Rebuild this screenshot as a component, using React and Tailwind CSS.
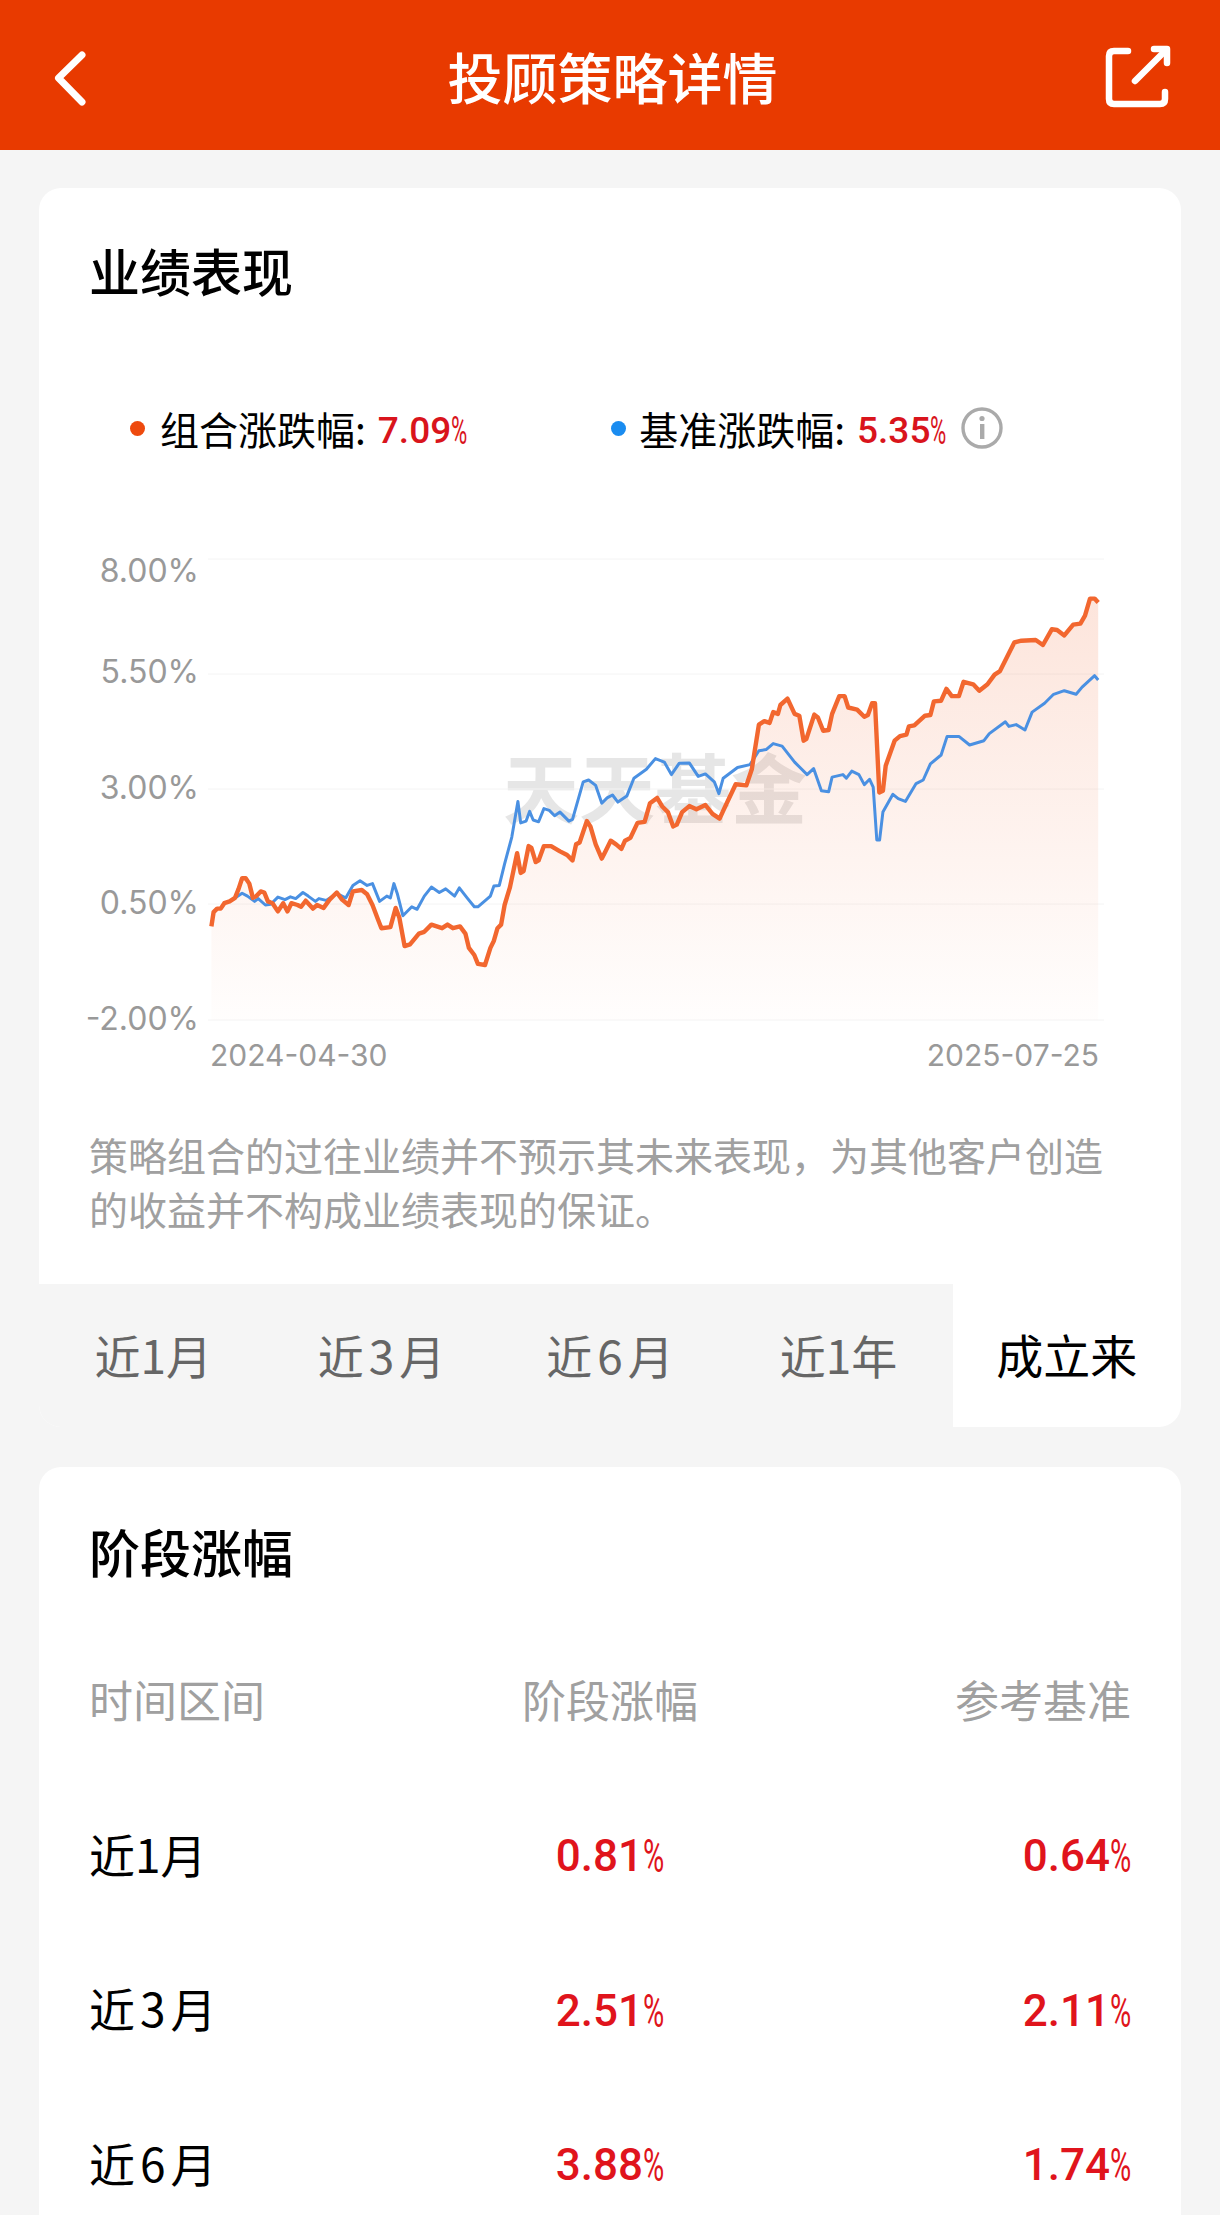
import React from "react";

const cjk = "font-['Noto_Sans_CJK_SC',sans-serif]";
const num = "font-['Roboto','Noto_Sans_CJK_SC',sans-serif]";
const axis = "font-['Inter','Noto_Sans_CJK_SC',sans-serif]";

// traced from the reference, left half is offset 60/530 and right half 600/530, both at 2.8x
const toPage = (ox) => ([x, y]) => [ox + x / 2.8, 530 + y / 2.8];

const orangeLeft = [[424,1110],[430,1070],[440,1060],[450,1060],[460,1045],[475,1040],[490,1030],[500,1005],[510,975],[520,975],[530,990],[540,1030],[550,1025],[562,1012],[572,1015],[582,1040],[595,1045],[610,1068],[625,1045],[637,1068],[648,1045],[665,1050],[675,1055],[688,1038],[708,1060],[720,1050],[738,1058],[755,1035],[775,1015],[790,1035],[808,1050],[820,1012],[845,1008],[860,1020],[875,1050],[890,1090],[900,1115],[925,1112],[940,1058],[950,1085],[965,1165],[980,1160],[1005,1130],[1020,1125],[1040,1105],[1070,1115],[1085,1105],[1100,1115],[1120,1110],[1135,1130],[1145,1170],[1160,1190],[1170,1215],[1190,1218],[1205,1170],[1215,1150],[1225,1115],[1235,1105],[1245,1050],[1260,1000],[1280,905],[1290,960],[1298,955],[1312,885],[1320,890],[1332,930],[1340,925],[1355,885],[1375,885],[1400,900],[1420,910],[1435,925],[1445,880],[1455,875],[1475,815],[1485,830],[1500,880],[1517,920]];
const orangeRight = [[15,900],[30,870],[45,880],[60,893],[70,870],[85,862],[105,820],[125,817],[140,765],[160,750],[175,775],[190,790],[205,830],[215,825],[230,790],[250,773],[270,782],[295,770],[315,795],[335,808],[350,775],[380,712],[410,715],[425,670],[445,545],[460,535],[475,540],[485,510],[498,515],[505,490],[525,472],[545,515],[558,520],[570,590],[578,585],[600,517],[610,525],[625,562],[640,560],[650,515],[670,465],[685,465],[695,497],[720,503],[740,523],[750,518],[762,485],[770,485],[782,735],[792,730],[800,660],[825,590],[840,577],[858,573],[865,550],[880,547],[910,520],[925,518],[935,480],[955,478],[970,445],[985,465],[1005,465],[1018,425],[1045,432],[1062,450],[1085,432],[1105,405],[1120,395],[1160,315],[1180,310],[1220,308],[1240,322],[1265,278],[1280,280],[1300,295],[1325,265],[1345,262],[1358,240],[1372,192],[1385,192],[1395,203]];
const blueLeft = [[490,1030],[510,1017],[525,1025],[545,1040],[555,1032],[575,1050],[590,1048],[610,1028],[630,1035],[645,1027],[660,1032],[680,1015],[695,1025],[715,1040],[725,1032],[745,1037],[775,1018],[800,1030],[820,995],[840,982],[860,995],[875,990],[895,1040],[915,1025],[925,1030],[935,990],[945,1020],[960,1080],[985,1055],[1000,1062],[1020,1025],[1040,1000],[1062,1015],[1080,1005],[1105,1025],[1118,1002],[1140,1030],[1160,1055],[1170,1055],[1205,1025],[1215,997],[1230,995],[1245,935],[1265,860],[1282,760],[1290,820],[1305,815],[1315,788],[1325,812],[1340,817],[1355,780],[1370,785],[1385,800],[1400,790],[1425,815],[1435,810],[1465,705],[1480,700],[1500,715],[1517,765]];
const blueRight = [[20,750],[35,742],[50,762],[75,745],[95,695],[130,670],[155,640],[180,650],[200,685],[222,653],[250,652],[275,690],[295,683],[320,705],[333,738],[345,695],[385,665],[420,657],[445,618],[465,615],[485,598],[510,605],[545,650],[560,665],[580,685],[598,668],[620,730],[640,733],[650,692],[680,685],[690,695],[705,675],[725,685],[740,713],[755,698],[765,720],[775,868],[783,868],[792,790],[820,740],[835,752],[855,760],[885,710],[905,700],[925,655],[955,630],[972,578],[1005,578],[1035,602],[1075,590],[1090,570],[1135,537],[1145,550],[1165,545],[1190,560],[1210,510],[1245,485],[1270,460],[1300,450],[1333,460],[1350,440],[1385,408],[1395,420]];

const orange = [...orangeLeft.map(toPage(60)), ...orangeRight.map(toPage(600))];
const blue = [...blueLeft.map(toPage(60)), ...blueRight.map(toPage(600))];
const line = (pts) => pts.map((p) => p[0].toFixed(1) + "," + p[1].toFixed(1)).join(" ");
const area = line([[orange[0][0], 1020], ...orange, [orange[orange.length - 1][0], 1020]]);

const BigPercent = ({ value }) => (
  <span className={`${num} text-[44px] font-medium text-[#e0141c] whitespace-nowrap`}>
    {value}
    <span className="inline-block w-[21px] origin-left scale-x-[0.66] scale-y-[1.06] font-normal">%</span>
  </span>
);

const SmallPercent = ({ value }) => (
  <span className={`${num} text-[37px] font-medium text-[#d9141c] whitespace-nowrap`}>
    {value}
    <span className="inline-block w-[17px] origin-left scale-x-[0.6] scale-y-[1.06] font-normal">%</span>
  </span>
);

const Chart = () => (
  <div className="relative h-[568px] mt-[111px]">
    {/* watermark */}
    <div className={`${cjk} absolute left-[414px] top-[181px] text-[76px] font-bold leading-[90px] whitespace-nowrap text-[#e6e6e6]`}>
      天天基金
    </div>
    <svg className="absolute left-[-89px] top-[-559px] overflow-visible" width="1220" height="1100">
      <defs>
        <linearGradient id="fill" x1="0" y1="590" x2="0" y2="1020" gradientUnits="userSpaceOnUse">
          <stop offset="0" stopColor="#f0571c" stopOpacity="0.16" />
          <stop offset="1" stopColor="#f0571c" stopOpacity="0.01" />
        </linearGradient>
      </defs>
      {[559, 674, 789, 904, 1020].map((y) => (
        <line key={y} x1="208" x2="1104" y1={y} y2={y} stroke="#f4f4f4" strokeWidth="1" />
      ))}
      <polygon points={area} fill="url(#fill)" />
      <polyline points={line(blue)} fill="none" stroke="#4a90e2" strokeWidth="3" strokeLinejoin="round" />
      <polyline points={line(orange)} fill="none" stroke="#f2672f" strokeWidth="4.4" strokeLinejoin="round" />
    </svg>
    {/* y axis labels */}
    <div className={`${axis} text-[32px] leading-[40px] text-[#999999]`}>
      <span className="absolute right-[932px] top-[-8px]">8.00%</span>
      <span className="absolute right-[932px] top-[93px]">5.50%</span>
      <span className="absolute right-[932px] top-[209px]">3.00%</span>
      <span className="absolute right-[932px] top-[324px]">0.50%</span>
      <span className="absolute right-[932px] top-[440px]">-2.00%</span>
    </div>
    <div className={`${axis} absolute left-[121px] top-[476px] flex w-[889px] justify-between text-[30px] leading-[40px] text-[#999999]`}>
      <span>2024-04-30</span>
      <span>2025-07-25</span>
    </div>
  </div>
);

const rows = [
  { name: <>近1月</>, a: "0.81", b: "0.64" },
  { name: <>近<span className="mx-[5px]">3</span>月</>, a: "2.51", b: "2.11" },
  { name: <>近<span className="mx-[5px]">6</span>月</>, a: "3.88", b: "1.74" },
];

export default function App() {
  return (
    <div className={`${cjk} h-[2215px] overflow-hidden bg-[#f5f5f5]`}>
      {/* Header */}
      <div className="grid h-[150px] grid-cols-[1fr_auto_1fr] items-center bg-[#e83a00] pl-[40px] pr-[30px]">
        <svg width="60" height="90" viewBox="0 0 60 90" fill="none" stroke="#ffffff" strokeWidth="7" strokeLinecap="round" strokeLinejoin="round">
          <path d="M42 25 L18.5 48 L42 72" />
        </svg>
        <div className="ml-[-5px] text-[55px] font-medium leading-[60px] text-white">投顾策略详情</div>
        <svg className="justify-self-end" width="100" height="90" viewBox="0 0 100 90" fill="none" stroke="#ffffff" strokeWidth="6.5" strokeLinecap="round" strokeLinejoin="round">
          <path d="M38 21 H24 Q19 21 19 26 V69 Q19 74 24 74 H70 Q75 74 75 69 V62" />
          <path d="M45 51 L76 20" />
          <path d="M64 19 H77 V33" />
        </svg>
      </div>

      <div className="flex flex-col gap-[40px] px-[39px] pt-[38px]">
        {/* Performance card */}
        <div className="overflow-hidden rounded-[22px] bg-white">
          <div className="px-[50px] pt-[52px]">
            <div className="text-[51px] font-medium leading-[60px] text-black">业绩表现</div>

            <div className="mt-[108px] flex h-[40px] items-center pl-[41px] text-[39px] leading-[40px] text-black">
              <span className="h-[15px] w-[15px] rounded-full bg-[#ee4a0e]" />
              <span className="ml-[15px]">组合涨跌幅:</span>
              <span className="ml-[12px]"><SmallPercent value="7.09" /></span>
              <span className="ml-[143px] h-[15px] w-[15px] rounded-full bg-[#1a8cf0]" />
              <span className="ml-[13px]">基准涨跌幅:</span>
              <span className="ml-[12px]"><SmallPercent value="5.35" /></span>
              <svg className="ml-[14px]" width="42" height="42" viewBox="0 0 42 42" fill="none">
                <circle cx="21" cy="21" r="19" stroke="#aaaaaa" strokeWidth="3.4" />
                <circle cx="21" cy="11.5" r="2.6" fill="#aaaaaa" />
                <rect x="19" y="17" width="4.4" height="15" fill="#aaaaaa" />
              </svg>
            </div>

            <Chart />

            <div className="text-[39px] leading-[54px] text-[#a0a0a0]">
              策略组合的过往业绩并不预示其未来表现，为其他客户创造的收益并不构成业绩表现的保证。
            </div>
          </div>

          {/* Range tabs */}
          <div className="mt-[49px] grid h-[143px] grid-cols-5 text-center">
            <div className="flex items-center justify-center bg-[#f5f5f5] pb-[3px] text-[46px] text-[#666666]">近1月</div>
            <div className="flex items-center justify-center bg-[#f5f5f5] pb-[3px] text-[46px] text-[#666666]">近<span className="mx-[5px]">3</span>月</div>
            <div className="flex items-center justify-center bg-[#f5f5f5] pb-[3px] text-[46px] text-[#666666]">近<span className="mx-[5px]">6</span>月</div>
            <div className="flex items-center justify-center bg-[#f5f5f5] pb-[3px] text-[46px] text-[#666666]">近1年</div>
            <div className="flex items-center justify-center pb-[3px] text-[47px] text-black">成立来</div>
          </div>
        </div>

        {/* Stage returns card */}
        <div className="h-[800px] rounded-[22px] bg-white px-[50px] pt-[54px]">
          <div className="text-[51px] font-medium leading-[60px] text-black">阶段涨幅</div>
          <div className="mt-[41px] grid h-[154px] grid-cols-3 items-center text-[44px] text-[#a0a0a0]">
            <div>时间区间</div>
            <div className="text-center">阶段涨幅</div>
            <div className="text-right">参考基准</div>
          </div>
          {rows.map((r) => (
            <div key={r.a} className="grid h-[154.5px] grid-cols-3 items-center text-[46px] text-black">
              <div>{r.name}</div>
              <div className="text-center"><BigPercent value={r.a} /></div>
              <div className="text-right"><BigPercent value={r.b} /></div>
            </div>
          ))}
        </div>
      </div>
    </div>
  );
}
